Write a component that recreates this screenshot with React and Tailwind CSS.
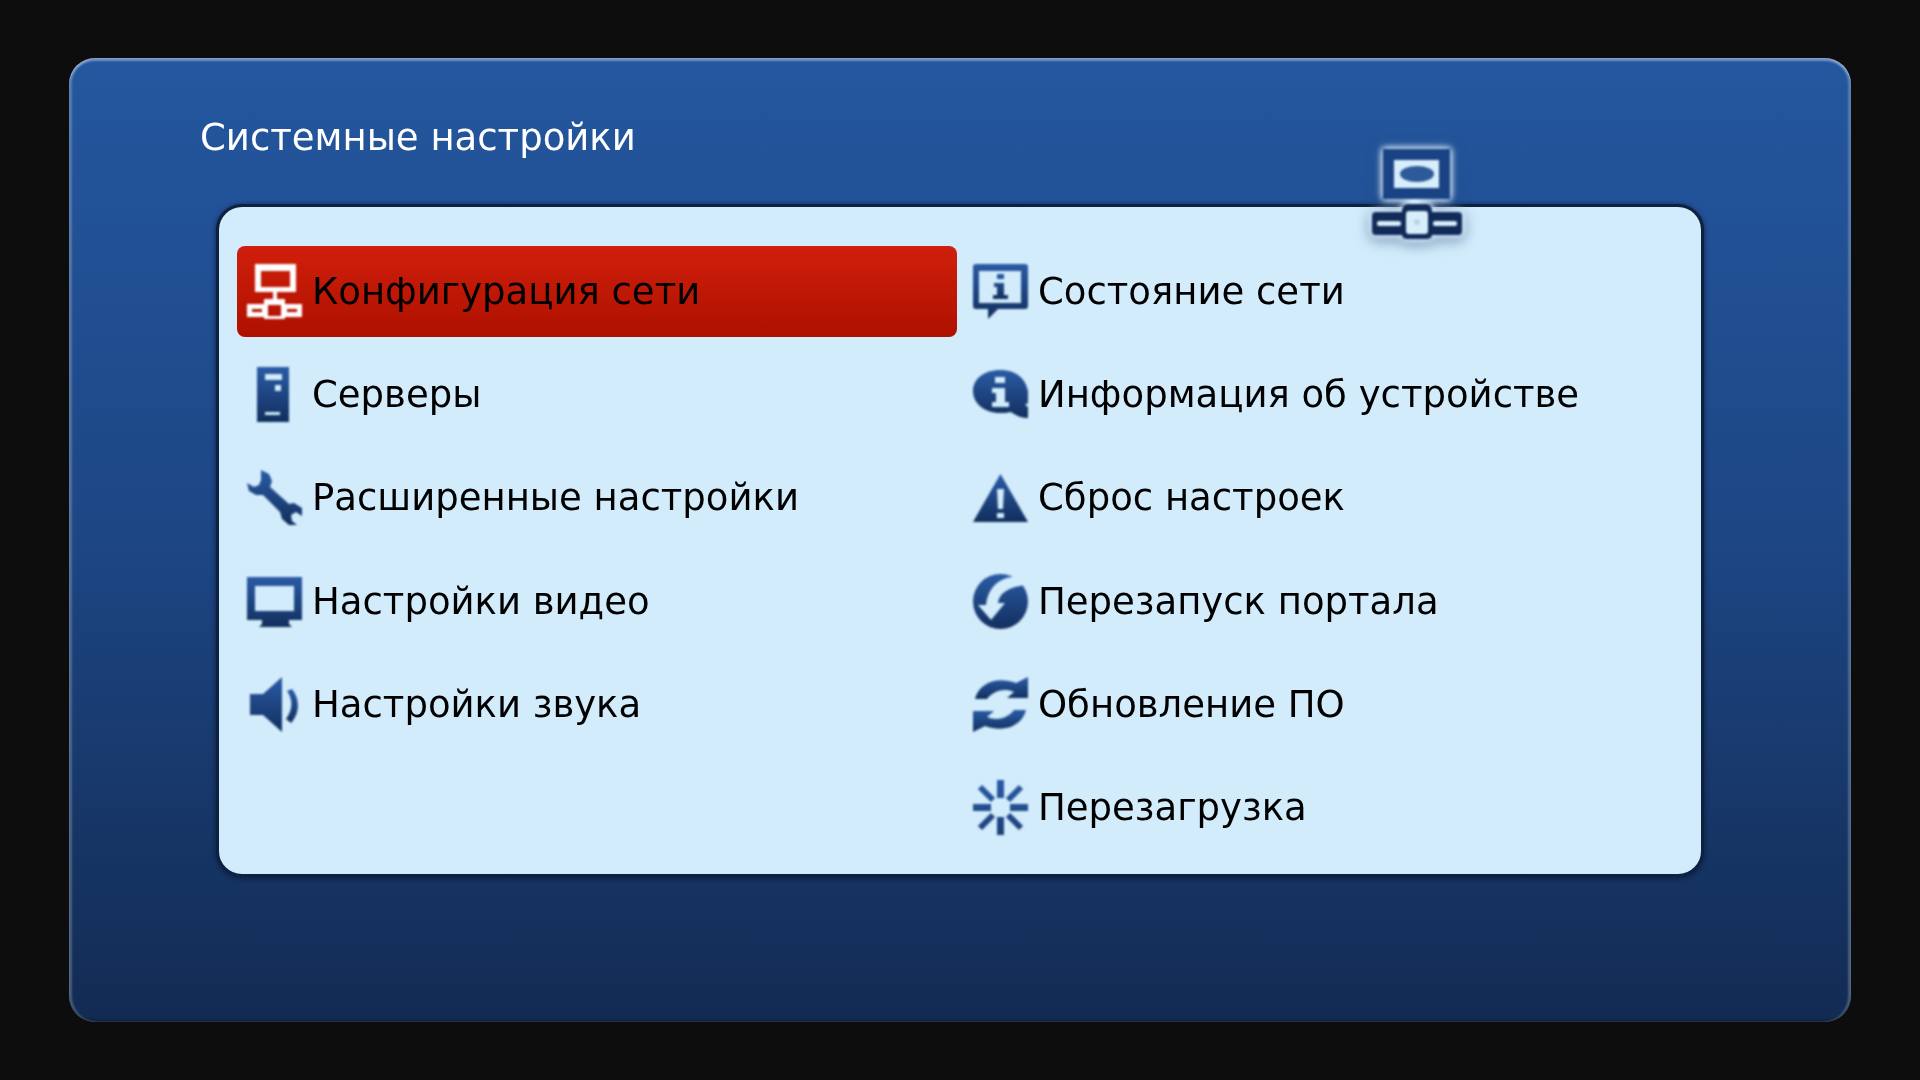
import React from 'react';

const Icon = ({ id, children, light }) => (
  <svg viewBox="0 0 55 55" className="w-[55px] h-[55px] shrink-0 blur-[0.8px]" fill={light ? '#ffffff' : `url(#${id})`}>
    <defs>
      <linearGradient id={id} x1="0" y1="0" x2="0" y2="1">
        <stop offset="0" stopColor="#2a5ba6" />
        <stop offset="1" stopColor="#122f5e" />
      </linearGradient>
    </defs>
    {children}
  </svg>
);

const NetworkIcon = () => (
  <Icon id="net" light>
    <path fillRule="evenodd" d="M8 0H49V28H8ZM14 7V23H43V7Z" />
    <rect x="26" y="28" width="4" height="8" />
    <path fillRule="evenodd" d="M17 35H38V40H55V53H38V55H17V53H0V40H17ZM21 41V52H34V41ZM5 45V48H15V45ZM40 45V48H50V45Z" />
  </Icon>
);

const ServerIcon = () => (
  <Icon id="srv">
    <path fillRule="evenodd" d="M10 0H42V55H10ZM18 7V13H35V7ZM28 18V24H34V18ZM18 45V48H33V45Z" />
  </Icon>
);

const WrenchIcon = () => (
  <Icon id="wrench">
    <path d="M14 0L22 4L25 11L23 17L42 34L47 33L55 38L55 46L49 42L44 45L45 51L50 55L42 55L35 49L33 42L16 25L9 25L2 21L0 13L7 17L12 15L14 10Z" />
  </Icon>
);

const TvIcon = () => (
  <Icon id="tv">
    <path fillRule="evenodd" d="M0 3H55V46H42V50L45 53H12L15 50V46H0ZM8 12V37H47V12Z" />
  </Icon>
);

const SpeakerIcon = () => (
  <Icon id="spk">
    <path d="M3 17H16L35 0V55L16 38H3Z" />
    <path d="M40 14C46 22 46 33 39 42L44 46C53 36 53 22 45 12Z" />
  </Icon>
);

const StatusIcon = () => (
  <Icon id="status">
    <path fillRule="evenodd" d="M3 0H52Q55 0 55 3V42Q55 45 52 45H25L15 55V45H3Q0 45 0 42V3Q0 0 3 0ZM6 7V39H48V7Z" />
    <path d="M24 10H31V15H24ZM21 19H31V31H35V35H20V31H24V23H21Z" />
  </Icon>
);

const InfoIcon = () => (
  <Icon id="info">
    <path fillRule="evenodd" d="M27 3C42 3 52 10 55 24V36L52 38L55 40V51C48 51 42 48 38 45C34 46 31 46 27 46C11 46 0 36 0 24C0 12 11 3 27 3ZM22 10V16H32V10ZM19 21V26H23V35H19V40H36V35H32V21Z" />
  </Icon>
);

const WarningIcon = () => (
  <Icon id="warn">
    <path fillRule="evenodd" d="M27.5 4L55 52H0ZM24 19L25 39H30L31 19ZM24 43V48H31V43Z" />
  </Icon>
);

const RestartIcon = () => (
  <Icon id="restart">
    <circle cx="27.5" cy="27.5" r="27.5" />
    <path fill="#d2ecfb" d="M50 3C36 1 16 6 13 31L5 31L18 46L32 29L25 29C26 18 38 12 55 11L55 3Z" />
  </Icon>
);

const UpdateIcon = () => (
  <Icon id="update">
    <path d="M2 22C6 6 24 -1 43 6L55 0V21H34L41 15C32 11 21 13 14 22Z" />
    <path d="M53 33C49 49 31 56 12 49L0 55V34H21L14 40C23 44 34 42 41 33Z" />
  </Icon>
);

const RebootIcon = () => (
  <Icon id="reboot">
    <g stroke="url(#rebootLine)" strokeWidth="7">
      <path d="M27.5 0V18M27.5 37V55M0 27.5H18M37 27.5H55" />
    </g>
    <g stroke="url(#rebootLine)" strokeWidth="6">
      <path d="M7 7L20 20M35 35L48 48M48 7L35 20M20 35L7 48" />
    </g>
    <defs>
      <linearGradient id="rebootLine" gradientUnits="userSpaceOnUse" x1="0" y1="0" x2="0" y2="55">
        <stop offset="0" stopColor="#2a5ba6" />
        <stop offset="1" stopColor="#1b3f78" />
      </linearGradient>
    </defs>
  </Icon>
);

const leftItems = [
  { label: 'Конфигурация сети', icon: NetworkIcon, active: true },
  { label: 'Серверы', icon: ServerIcon },
  { label: 'Расширенные настройки', icon: WrenchIcon },
  { label: 'Настройки видео', icon: TvIcon },
  { label: 'Настройки звука', icon: SpeakerIcon },
];

const rightItems = [
  { label: 'Состояние сети', icon: StatusIcon },
  { label: 'Информация об устройстве', icon: InfoIcon },
  { label: 'Сброс настроек', icon: WarningIcon },
  { label: 'Перезапуск портала', icon: RestartIcon },
  { label: 'Обновление ПО', icon: UpdateIcon },
  { label: 'Перезагрузка', icon: RebootIcon },
];

const MenuItem = ({ label, icon: ItemIcon, active }) => (
  <div
    className={`h-[91px] flex items-center gap-[10px] pl-[10px] rounded-[8px] ${
      active ? 'bg-gradient-to-b from-[#d01f0c] to-[#ae1000]' : ''
    }`}
  >
    <ItemIcon />
    <span className="text-[37px] leading-none text-black blur-[0.4px]">{label}</span>
  </div>
);

export default function App() {
  return (
    <div className="w-[1920px] h-[1080px] bg-[#0d0d0d] px-[69px] pt-[58px] font-['DejaVu_Sans',sans-serif] overflow-hidden">
      <div className="relative w-[1782px] h-[964px] rounded-[26px] bg-gradient-to-b from-[#24579f] via-[#1d4684] to-[#122b53] shadow-[inset_0_3px_2px_rgba(255,255,255,0.35),inset_3px_0_2px_rgba(255,255,255,0.22),inset_-3px_0_2px_rgba(255,255,255,0.22),inset_0_-2px_2px_rgba(0,0,0,0.4)]">
        <h1 className="pl-[131px] pt-[58px] text-[37px] leading-[44px] font-normal text-white blur-[0.4px]">
          Системные настройки
        </h1>
        <div className="ml-[147px] mt-[44px] w-[1488px] h-[673px] rounded-[26px] border-[3px] border-[#0d2242] bg-[#d2ecfb] shadow-[0_1px_4px_1px_rgba(8,24,50,0.6)] pt-[39px] px-[18px]">
          <div className="grid grid-cols-[720px_1fr] gap-x-[6px]">
            <div className="flex flex-col gap-y-[12.2px]">
              {leftItems.map((item) => (
                <MenuItem key={item.label} {...item} />
              ))}
            </div>
            <div className="flex flex-col gap-y-[12.2px]">
              {rightItems.map((item) => (
                <MenuItem key={item.label} {...item} />
              ))}
            </div>
          </div>
        </div>
        {/* network badge sits over the panel edge */}
        <svg
          viewBox="0 0 90 90"
          className="absolute left-[1303px] top-[91px] w-[90px] h-[90px] [filter:drop-shadow(0_0_3px_#d8eeff)_drop-shadow(0_0_3px_#d8eeff)_drop-shadow(0_3px_6px_rgba(20,50,100,0.5))_blur(0.8px)]"
        >
          <path fill="#1a4386" fillRule="evenodd" d="M11 0H78V50H11ZM22 11V39H67V11Z" />
          <rect x="22" y="11" width="45" height="28" fill="#d8eefb" />
          <ellipse cx="45" cy="25" rx="17" ry="8" fill="#2f5a99" />
          <rect x="39" y="50" width="7" height="7" fill="#d8eefb" />
          <path fill="#102b58" d="M30 63Q30 55 36 55H54Q60 55 60 63H86Q90 63 90 67V82Q90 86 86 86H60Q60 90 54 90H36Q30 90 30 86H4Q0 86 0 82V67Q0 63 4 63Z" />
          <rect x="34" y="62" width="22" height="23" rx="3" fill="#d8eefb" />
          <circle cx="45" cy="73" r="3" fill="#b9d3e9" />
          <rect x="5" y="72" width="24" height="5" rx="2" fill="#d8eefb" />
          <rect x="61" y="72" width="24" height="5" rx="2" fill="#d8eefb" />
        </svg>
      </div>
    </div>
  );
}
